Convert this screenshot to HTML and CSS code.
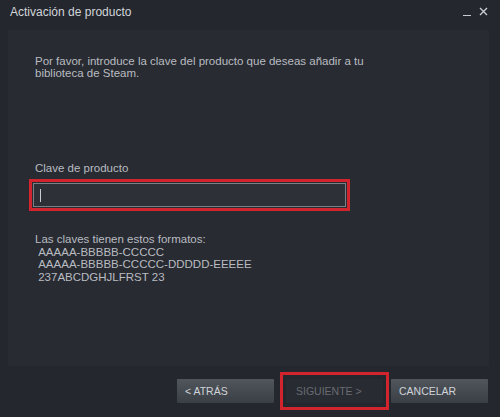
FILE: index.html
```html
<!DOCTYPE html>
<html lang="es">
<head>
<meta charset="utf-8">
<title>Activación de producto</title>
<link rel="stylesheet" href="styles.css">
</head>
<body>
<div class="window">
  <div class="titlebar">
    <span class="title">Activación de producto</span>
    <div class="controls">
      <span class="min"></span>
      <svg class="close" width="9" height="9" viewBox="0 0 9 9"><path d="M1 1L8 8M8 1L1 8" stroke="#c9ccd1" stroke-width="1.4"/></svg>
    </div>
  </div>
  <div class="panel">
    <p class="intro">Por favor, introduce la clave del producto que deseas añadir a tu<br>biblioteca de Steam.</p>
    <label class="label">Clave de producto</label>
    <div class="highlight field-hl">
      <div class="input"><span class="caret"></span></div>
    </div>
    <div class="formats">
      <div>Las claves tienen estos formatos:</div>
      <div>&nbsp;AAAAA-BBBBB-CCCCC</div>
      <div>&nbsp;AAAAA-BBBBB-CCCCC-DDDDD-EEEEE</div>
      <div>&nbsp;237ABCDGHJLFRST 23</div>
    </div>
  </div>
  <div class="footer">
    <button class="btn">&lt; ATRÁS</button>
    <div class="highlight btn-hl"><button class="btn disabled">SIGUIENTE &gt;</button></div>
    <button class="btn">CANCELAR</button>
  </div>
</div>
</body>
</html>
```
FILE: styles.css
```css
html, body {
  margin: 0;
  padding: 0;
  background: #24272d;
}
.window {
  width: 500px;
  height: 417px;
  background: #24272d;
  display: flex;
  flex-direction: column;
  font-family: "Liberation Sans", Arial, sans-serif;
  color: #b9bcc1;
  overflow: hidden;
}
.titlebar {
  height: 30px;
  display: flex;
  justify-content: space-between;
  align-items: flex-start;
  padding: 5px 12px 0 10px;
  box-sizing: border-box;
}
.title {
  font-size: 12px;
  color: #d2d5da;
  line-height: 14px;
}
.controls {
  display: flex;
  align-items: flex-end;
  gap: 8px;
  padding-top: 2px;
}
.min {
  width: 8px;
  height: 1px;
  background: #c9ccd1;
}
.panel {
  height: 336px;
  margin: 0 11px 0 8px;
  background: #282b31;
  box-sizing: border-box;
  padding: 25px 0 0 27px;
  display: flex;
  flex-direction: column;
}
.intro {
  margin: 0;
  font-size: 11.5px;
  line-height: 12px;
}
.label {
  margin-top: 83px;
  font-size: 11.5px;
  line-height: 13px;
}
.highlight {
  border: 3px solid #d1242d;
  box-sizing: border-box;
}
.field-hl {
  margin: 4px 0 0 -6px;
  width: 321px;
  height: 32px;
  padding: 1px;
}
.input {
  height: 100%;
  box-sizing: border-box;
  border: 1px solid #7b7e84;
  background: #2d3036;
  padding: 5px 6px;
}
.caret {
  display: block;
  width: 1px;
  height: 13px;
  background: #c9ccd1;
}
.formats {
  margin-top: 22px;
  font-size: 11.5px;
  line-height: 12.5px;
}
.footer {
  flex: 1;
  display: flex;
  align-items: center;
  padding-left: 177px;
  padding-bottom: 2px;
  box-sizing: border-box;
}
.btn {
  width: 97px;
  height: 24px;
  border: 0;
  padding: 0 0 0 8px;
  text-align: left;
  font-family: "Liberation Sans", Arial, sans-serif;
  font-size: 10.5px;
  color: #d0d3d8;
  background: linear-gradient(#51565d, #3a3e45);
  border-radius: 1px;
}
.btn-hl {
  width: 109px;
  height: 38px;
  margin: 0 2px 0 6px;
  padding: 4px 3px;
}
.btn.disabled {
  width: 100%;
  height: 100%;
  background: #282b31;
  color: #696c72;
  padding-left: 10px;
}
```
